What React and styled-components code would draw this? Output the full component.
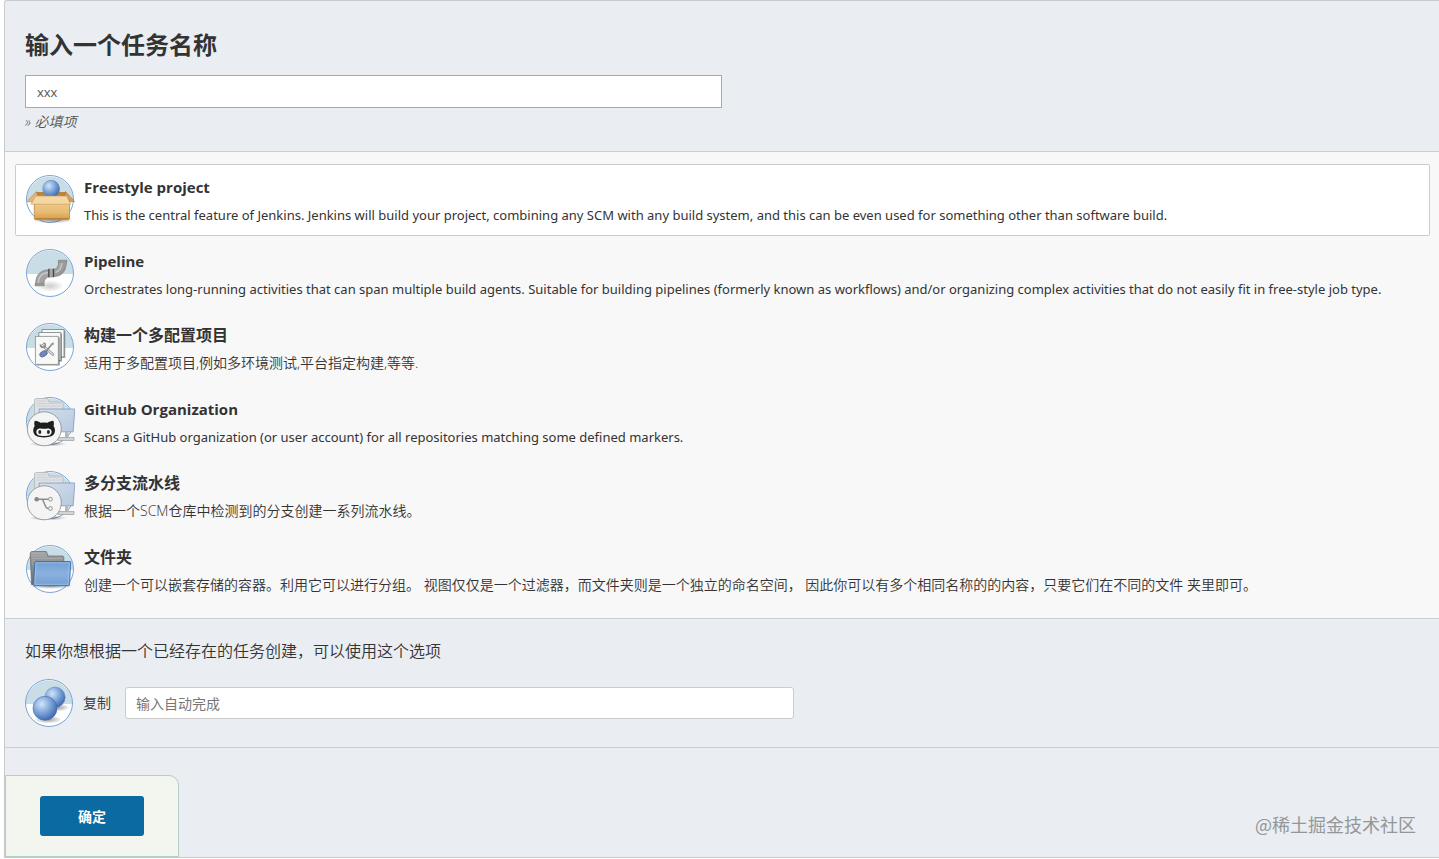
import { useState } from "react";
import styled, { createGlobalStyle } from "styled-components";

const GlobalStyle = createGlobalStyle`
  * {
    box-sizing: border-box;
  }
  body {
    margin: 0;
    background-color: #fff;
    color: #333;
    font-family: "Open Sans", "Noto Sans CJK SC", sans-serif;
    font-size: 14px;
    line-height: 20px;
  }
  button, input {
    font-family: inherit;
  }
`;

const Panel = styled.form`
  margin-left: 4px;
  border: 1px solid #c5cbcd;
  border-right: none;
  border-top-left-radius: 3px;
  background-color: #eaedf1;
`;

const Header = styled.div`
  padding: 28px 20px 19px;
  border-bottom: 1px solid #c9cecf;
`;

const Title = styled.label`
  display: block;
  margin-bottom: 14px;
  font-size: 24px;
  font-weight: bold;
  line-height: 32px;
`;

const TextInput = styled.input`
  display: block;
  width: ${(props) => props.$width};
  height: ${(props) => (props.$large ? "33px" : "32px")};
  padding: 0 ${(props) => (props.$large ? "11px" : "10px")};
  border: 1px solid ${(props) => (props.$large ? "#a5a9ab" : "#ccc")};
  border-radius: ${(props) => (props.$large ? "0" : "3px")};
  background-color: #fff;
  color: #555;
  font-size: ${(props) => (props.$large ? "13px" : "14px")};
  outline: none;

  &::placeholder {
    color: #777;
    opacity: 1;
  }
`;

const Hint = styled.div`
  margin-top: 4px;
  color: #555;
  font-style: italic;
  font-weight: 350;
`;

const JobList = styled.div`
  display: flex;
  flex-direction: column;
  gap: 2px;
  padding: 12px 9px 12px 10px;
  border-bottom: 1px solid #c9cecf;
  background-color: #f8f8f8;
`;

const JobItem = styled.label`
  position: relative;
  display: flex;
  gap: 9px;
  padding: 10px 9px;
  border: 1px solid ${(props) => (props.$active ? "#ccc" : "transparent")};
  border-radius: 2px;
  background-color: ${(props) => (props.$active ? "#fff" : "transparent")};
  cursor: pointer;

  svg {
    flex-shrink: 0;
  }
`;

// 隐藏原生单选框，只保留可点击区域
const Radio = styled.input`
  position: absolute;
  opacity: 0;
`;

const JobName = styled.div`
  margin-bottom: 6px;
  font-size: ${(props) => (props.$latin ? "15px" : "16px")};
  font-weight: bold;
  line-height: 24px;
`;

const JobDesc = styled.div`
  font-family: ${(props) => (props.$latin ? '"Noto Sans", sans-serif' : "inherit")};
  font-size: ${(props) => (props.$latin ? "13px" : "14px")};
  font-weight: ${(props) => (props.$latin ? "400" : "350")};
`;

const CopySection = styled.div`
  padding: 20px 20px 19px;
  border-bottom: 1px solid #c9cecf;
`;

const CopyTitle = styled.div`
  margin-bottom: 15px;
  font-size: 16px;
  font-weight: 350;
  line-height: 24px;
`;

const CopyRow = styled.div`
  display: flex;
  align-items: center;

  label {
    margin: 0 14px 0 8px;
    font-weight: 350;
  }
`;

const Footer = styled.div`
  display: flex;
  padding-top: 27px;
`;

const ButtonBox = styled.div`
  padding: 20px 34px;
  border: 1px solid #b2cfc4;
  border-top-right-radius: 10px;
  background-color: #f3f6ef;
`;

const SubmitButton = styled.button`
  display: block;
  width: 104px;
  height: 40px;
  border: none;
  border-radius: 3px;
  background-color: #0b6aa2;
  color: #fff;
  font-size: 14px;
  font-weight: bold;
  cursor: pointer;
`;

const Watermark = styled.div`
  position: absolute;
  right: 23px;
  top: 812px;
  color: #92979a;
  font-family: "Noto Sans CJK SC", sans-serif;
  font-size: 18px;
  line-height: 24px;
`;

// 所有图标共用的渐变
const IconDefs = () => (
  <svg width="0" height="0" style={{ display: "block" }} aria-hidden="true">
    <defs>
      <radialGradient id="ball" cx="0.36" cy="0.32" r="0.75">
        <stop offset="0" stopColor="#d3e5f8" />
        <stop offset="0.45" stopColor="#85abdd" />
        <stop offset="1" stopColor="#3761a8" />
      </radialGradient>
      <linearGradient id="box" x1="0" y1="0" x2="0" y2="1">
        <stop offset="0" stopColor="#f0cd90" />
        <stop offset="0.6" stopColor="#e8bd74" />
        <stop offset="1" stopColor="#d69b4a" />
      </linearGradient>
      <linearGradient id="pipe" x1="0" y1="0" x2="1" y2="1">
        <stop offset="0" stopColor="#a8a8a8" />
        <stop offset="0.5" stopColor="#a3a3a3" />
        <stop offset="1" stopColor="#777" />
      </linearGradient>
      <linearGradient id="folder" x1="0" y1="0" x2="0" y2="1">
        <stop offset="0" stopColor="#729fd2" />
        <stop offset="0.5" stopColor="#8bb1de" />
        <stop offset="1" stopColor="#739fd3" />
      </linearGradient>
      <linearGradient id="tab" x1="0" y1="0" x2="0" y2="1">
        <stop offset="0" stopColor="#a3a5a6" />
        <stop offset="1" stopColor="#696c70" />
      </linearGradient>
      <linearGradient id="screen" x1="0" y1="0" x2="1" y2="1">
        <stop offset="0" stopColor="#d2deec" />
        <stop offset="1" stopColor="#b7c9df" />
      </linearGradient>
      <radialGradient id="shadow">
        <stop offset="0" stopColor="#000" stopOpacity="0.4" />
        <stop offset="1" stopColor="#000" stopOpacity="0" />
      </radialGradient>
    </defs>
  </svg>
);

const Icon = ({ children, left = 5, top = 5 }) => (
  <svg width="50" height="50" viewBox={`${left} ${top} 50 50`} aria-hidden="true">
    <circle cx="30" cy="29" r="23.5" fill="#fff" />
    <path d="M6.5 30a23.5 23.5 0 0 1 47 0z" fill="#c8dde6" />
    {children}
  </svg>
);

const Ring = () => (
  <circle cx="30" cy="29" r="23.5" fill="none" stroke="#6c9bd0" strokeWidth="0.9" />
);

const FreestyleIcon = () => (
  <Icon>
    <Ring />
    <ellipse cx="33" cy="50" rx="21" ry="3.5" fill="url(#shadow)" />
    <path d="M16 22h30l3 6H12z" fill="#b98442" />
    <circle cx="31.2" cy="18.8" r="8.5" fill="url(#ball)" stroke="#5c7fb9" strokeWidth="0.5" />
    <path d="M16.5 21.5L7 31.500l6.500.5 4-6z" fill="#e3b873" stroke="#b58244" strokeWidth="0.6" />
    <path d="M45.500 21.500L54.500 31.500l-5.500.5-4-6z" fill="#d49f55" stroke="#a97435" strokeWidth="0.6" />
    <path d="M14.300 30h35.200v18.200q0 1.500-1.500 1.500H15.800q-1.500 0-1.500-1.500z" fill="url(#box)" stroke="#b57d35" strokeWidth="0.7" />
    <path d="M15.500 26h31l4.300 8.200H11z" fill="#f4d8a4" stroke="#c89955" strokeWidth="0.6" />
    <path d="M15.300 48.500h33.200" stroke="#b37730" strokeWidth="0.8" />
  </Icon>
);

const PipelineIcon = () => (
  <Icon>
    <ellipse cx="30" cy="42" rx="14" ry="6" fill="url(#shadow)" opacity="0.5" />
    <path
      d="M15.500 41.500C15.500 32 19 26.500 28 25.800h4c4.500 0 6.800-3.500 6.800-9.300h7.700C46.500 26.500 42.500 32 35 32.500h-4.500c-4.700.3-6.700 3.500-6.700 9z"
      fill="url(#pipe)"
      stroke="#757575"
      strokeWidth="0.6"
    />
    <path d="M18.200 39c.3-6 3.800-10 9.800-10.500M35.500 28.300c4.200-.8 6-4.500 6.300-9.500" fill="none" stroke="#c9c9c9" strokeWidth="1.3" />
    <path d="M28.800 24.800h4.800v8.600h-4.800z" fill="#909090" />
    <path d="M28.800 24.800v8.600M33.600 24.500v8.600" stroke="#3e3e3e" strokeWidth="1" />
    <path d="M31 25v8" stroke="#bdbdbd" strokeWidth="1" />
    <path d="M38.300 16.200h8.600v2h-8.600zM15 39.900h9.200v2h-9.200z" fill="#a5a5a5" stroke="#747474" strokeWidth="0.5" />
    <Ring />
  </Icon>
);

const MatrixIcon = () => (
  <Icon>
    <Ring />
    <path d="M23.500 12.500h21.800v27.500H23.500z" fill="#565d5c" opacity="0.55" />
    <path d="M22 11.500h22v27.500H22z" fill="#f8f8f8" stroke="#76807e" strokeWidth="0.8" />
    <path d="M20 15.500h22v28H20z" fill="#4e5857" opacity="0.6" />
    <path d="M18.800 14.500h22v28h-22z" fill="#f8f8f8" stroke="#76807e" strokeWidth="0.8" />
    <path d="M16.500 19.500h23.300v28H16.500z" fill="#4e5857" opacity="0.6" />
    <path d="M15.400 18.400h23v28h-23z" fill="#f8f8f7" stroke="#838a88" strokeWidth="0.8" />
    <path d="M22.500 27.500l10.500 9" stroke="#858a90" strokeWidth="2.6" strokeLinecap="round" />
    <path d="M22.500 27.500l10.500 9" stroke="#e0e1e2" strokeWidth="1.2" strokeLinecap="round" />
    <path d="M20.300 26.500q0 3 3 3 2.500-.5 2-3.500l-2-1.200" fill="none" stroke="#85898c" strokeWidth="1.4" />
    <path d="M26 33.500l6.500-8" stroke="#83878c" strokeWidth="1.5" />
    <path d="M31.500 25.500l2.500-1.300-.5 3z" fill="#8b9094" />
    <ellipse cx="23.5" cy="35.8" rx="4" ry="2.6" transform="rotate(-28 23.5 35.8)" fill="#7487b8" stroke="#56699c" strokeWidth="0.8" />
  </Icon>
);

const RepoBase = ({ children }) => (
  <Icon>
    <Ring />
    <path d="M14.500 24V7.500l1.500-1h11.500l1.500 3.500h13l1 1.500V24z" fill="#dfe1e3" stroke="#a9b0b8" strokeWidth="0.7" />
    <path d="M16.500 9h10M16.500 11.500H41M16.500 14H41" stroke="#c5c8cb" strokeWidth="0.6" />
    <path d="M19 17h35.800L53.200 39.800H20z" fill="url(#screen)" stroke="#7d9abf" strokeWidth="0.8" />
    <path d="M45 40h3.500v5H45z" fill="#b5b9bb" />
    <path d="M38 45.500h16v3H38z" fill="#d2d5d6" stroke="#999e9f" strokeWidth="0.7" />
    <ellipse cx="28" cy="52" rx="19" ry="2.5" fill="url(#shadow)" />
    <circle cx="24.3" cy="36.8" r="17" fill="#f4f4f4" stroke="#85898b" strokeWidth="0.8" />
    {children}
  </Icon>
);

const GithubIcon = () => (
  <RepoBase>
    <path
      d="M14.800 28.700c2.700.1 4.200 1.100 5.700 2.100q3.500-.7 7 0c1.500-1 3.200-2 5.800-2.100.9 2.100.7 4 .2 5.200 1.500 2 1.900 4.500 1 7.200-1.200 3.200-4.500 4.300-10.500 4.300s-9.200-1.100-10.300-4.300c-.9-2.700-.4-5.200 1-7.200-.5-1.200-.7-3.100.1-5.200z"
      fill="#1b1f20"
    />
    <path d="M18.500 36.800c2-.8 3.500-.1 5.500-.1s3.600-.7 5.500.1c3 1.200 2.800 5.300.2 6.400-2.500 1-9 1-11.400 0-2.600-1.100-2.800-5.200.2-6.400z" fill="#f4f4f4" />
    <ellipse cx="19.8" cy="40" rx="1.5" ry="2.1" fill="#24282a" />
    <ellipse cx="28.4" cy="40" rx="1.5" ry="2.1" fill="#24282a" />
  </RepoBase>
);

const MultibranchIcon = () => (
  <RepoBase>
    <path d="M17 33.200h11.500M21.500 33.200c3 0 2.500 9.300 7 9.300" fill="none" stroke="#8d8d8d" strokeWidth="1.5" />
    <circle cx="16.7" cy="33.2" r="2.3" fill="#888" />
    <circle cx="30.4" cy="33.2" r="1.9" fill="#f5f5f5" stroke="#888" strokeWidth="0.9" />
    <circle cx="30.4" cy="42.5" r="1.9" fill="#f5f5f5" stroke="#888" strokeWidth="0.9" />
  </RepoBase>
);

const FolderIcon = () => (
  <Icon>
    <Ring />
    <ellipse cx="31" cy="46" rx="22" ry="3" fill="url(#shadow)" />
    <path d="M11.500 44.500L10.200 13l1.200-1.500h14.800l1.500 3V16H43l.8 1.300V44.500z" fill="url(#tab)" stroke="#62676c" strokeWidth="0.7" />
    <path d="M12 13.500h13M12 16h14M12 18.500h30M12 21h3M12 24h2" stroke="#b5b7b8" strokeWidth="0.5" />
    <path d="M15.800 21.500h34.200q.8 0 .7.900L49.500 44.800q-.1.900-.9.900H14.500q-1 0-.9-1l1.200-22.300q.1-.9 1-.9z" fill="url(#folder)" stroke="#376fae" strokeWidth="0.9" />
    <path d="M16 22.800h33.400l-1.200 21.500H14.900z" fill="none" stroke="#a8c8eb" strokeWidth="0.6" />
  </Icon>
);

const CopyIcon = () => (
  <Icon left={6} top={4}>
    <Ring />
    <ellipse cx="38" cy="33.5" rx="13" ry="4" fill="url(#shadow)" />
    <circle cx="36" cy="23.3" r="10.2" fill="url(#ball)" stroke="#5a80ba" strokeWidth="0.5" />
    <ellipse cx="29" cy="45.5" rx="14" ry="4" fill="url(#shadow)" />
    <circle cx="26" cy="34.3" r="12" fill="url(#ball)" stroke="#456da9" strokeWidth="0.6" />
  </Icon>
);

const jobs = [
  {
    id: "freestyle",
    icon: FreestyleIcon,
    latin: true,
    name: "Freestyle project",
    desc: "This is the central feature of Jenkins. Jenkins will build your project, combining any SCM with any build system, and this can be even used for something other than software build.",
  },
  {
    id: "pipeline",
    icon: PipelineIcon,
    latin: true,
    name: "Pipeline",
    desc: "Orchestrates long-running activities that can span multiple build agents. Suitable for building pipelines (formerly known as workflows) and/or organizing complex activities that do not easily fit in free-style job type.",
  },
  {
    id: "matrix",
    icon: MatrixIcon,
    name: "构建一个多配置项目",
    desc: "适用于多配置项目,例如多环境测试,平台指定构建,等等.",
  },
  {
    id: "github",
    icon: GithubIcon,
    latin: true,
    name: "GitHub Organization",
    desc: "Scans a GitHub organization (or user account) for all repositories matching some defined markers.",
  },
  {
    id: "multibranch",
    icon: MultibranchIcon,
    name: "多分支流水线",
    desc: "根据一个SCM仓库中检测到的分支创建一系列流水线。",
  },
  {
    id: "folder",
    icon: FolderIcon,
    name: "文件夹",
    desc: "创建一个可以嵌套存储的容器。利用它可以进行分组。 视图仅仅是一个过滤器，而文件夹则是一个独立的命名空间， 因此你可以有多个相同名称的的内容，只要它们在不同的文件 夹里即可。",
  },
];

const App = () => {
  const [name, setName] = useState("xxx");
  const [from, setFrom] = useState("");
  const [selected, setSelected] = useState("freestyle");

  return (
    <>
      <GlobalStyle />
      <IconDefs />
      <Panel lang="zh-CN" onSubmit={(e) => e.preventDefault()}>
        <Header>
          <Title htmlFor="name">输入一个任务名称</Title>
          <TextInput
            id="name"
            type="text"
            $large
            $width="50%"
            value={name}
            onChange={(e) => setName(e.target.value)}
          />
          <Hint>» 必填项</Hint>
        </Header>

        <JobList>
          {jobs.map(({ id, icon: JobIcon, latin, name, desc }) => (
            <JobItem key={id} $active={selected === id}>
              <Radio
                type="radio"
                name="mode"
                value={id}
                checked={selected === id}
                onChange={() => setSelected(id)}
              />
              <JobIcon />
              <div>
                <JobName $latin={latin}>{name}</JobName>
                <JobDesc $latin={latin}>{desc}</JobDesc>
              </div>
            </JobItem>
          ))}
        </JobList>

        <CopySection>
          <CopyTitle>如果你想根据一个已经存在的任务创建，可以使用这个选项</CopyTitle>
          <CopyRow>
            <CopyIcon />
            <label htmlFor="from">复制</label>
            <TextInput
              id="from"
              type="text"
              $width="48%"
              placeholder="输入自动完成"
              value={from}
              onChange={(e) => setFrom(e.target.value)}
            />
          </CopyRow>
        </CopySection>

        <Footer>
          <ButtonBox>
            <SubmitButton type="submit">确定</SubmitButton>
          </ButtonBox>
        </Footer>
      </Panel>
      <Watermark>@稀土掘金技术社区</Watermark>
    </>
  );
};

export default App;
